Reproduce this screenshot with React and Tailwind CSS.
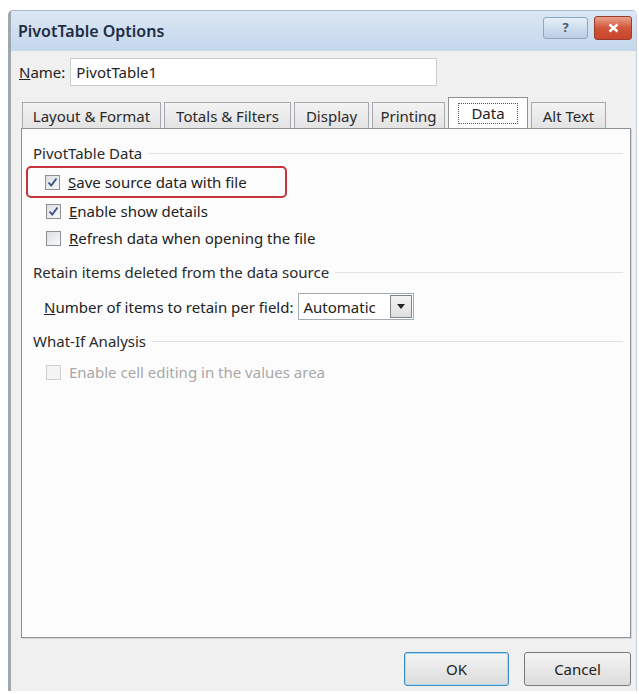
import React from "react";

const font = { fontFamily: '"Noto Sans", "Open Sans", Arial, sans-serif' };

function Check({ checked, disabled }) {
  return (
    <span
      className={`inline-flex h-[15px] w-[15px] shrink-0 items-center justify-center border ${
        disabled ? "border-[#cfcfcf] bg-[#f4f4f4]" : "border-[#8c8f94] bg-gradient-to-br from-[#dcdfe3] to-[#f7f8f9]"
      }`}
    >
      {checked && (
        <svg width="11" height="11" viewBox="0 0 11 11">
          <path d="M1.5 5.5 L4.2 8.5 L9.5 1.5" fill="none" stroke="#3b4f86" strokeWidth="1.8" />
        </svg>
      )}
    </span>
  );
}

function GroupHeader({ children }) {
  return (
    <div className="flex items-center gap-[6px] pr-[5px]">
      <span className="whitespace-nowrap text-[15px] leading-[20px] text-[#2a2a2a]">{children}</span>
      <span className="h-px flex-1 bg-[#dde3e8]" />
    </div>
  );
}

function Tab({ label, active, w }) {
  if (active) {
    return (
      <div className={`-mb-px flex h-[32px] items-center justify-center border border-b-0 border-[#8e9296] bg-white ${w}`}>
        <span className="border border-dotted border-[#555] px-[12px] text-[15px] leading-[19px] text-[#222]">{label}</span>
      </div>
    );
  }
  return (
    <div className={`mt-[5px] flex h-[26px] items-center justify-center border border-b-0 border-[#a6a9ad] bg-gradient-to-b from-[#f3f3f3] to-[#e3e3e3] text-[15px] leading-[20px] text-[#2a2a2a] ${w}`}>
      {label}
    </div>
  );
}

export default function App() {
  return (
    <div className="h-[694px] w-[639px] bg-white pl-[8px] pt-[10px]" style={font}>
      <div className="flex h-[681px] w-[629px] flex-col overflow-hidden rounded-t-[5px] border-l-[3px] border-r border-t border-l-[#9ea6ae] border-r-[#c8d3de] border-t-[#a9b8c8] bg-[#f0f0f0]">
        {/* title bar */}
        <div className="flex h-[40px] items-center justify-between bg-gradient-to-b from-[#dbe7f4] to-[#c4d7ec] pl-[7px] pr-[4px]">
          <span className="text-[16px] font-semibold leading-[20px] text-[#1f2d44]">PivotTable Options</span>
          <div className="mb-[6px] flex items-center gap-[6px]">
            <div className="flex h-[22px] w-[45px] items-center justify-center rounded-[3px] border border-[#8ea5bf] bg-gradient-to-b from-[#e7eff8] to-[#b9cde3] text-[13px] font-bold text-[#4a5a6e]">
              ?
            </div>
            <div className="flex h-[24px] w-[38px] items-center justify-center rounded-[3px] border border-[#9a3b2a] bg-gradient-to-b from-[#e8a08c] via-[#d0553a] to-[#c8452b]">
              <svg width="11" height="10" viewBox="0 0 11 10">
                <path d="M1.5 1.5 L9.5 8.5 M9.5 1.5 L1.5 8.5" stroke="#fff" strokeWidth="2.4" />
              </svg>
            </div>
          </div>
        </div>

        {/* client area */}
        <div className="flex flex-1 flex-col pl-[8px] pr-[5px]">
          <div className="mt-[7px] flex items-center gap-[5px]">
            <span className="text-[15px] leading-[20px] text-[#222]">
              <u>N</u>ame:
            </span>
            <div className="flex h-[28px] w-[367px] items-center border border-[#c9ced4] bg-white pl-[5px] text-[15px] text-[#222]">
              PivotTable1
            </div>
          </div>

          {/* tab strip */}
          <div className="ml-[3px] mt-[11px] flex items-end gap-[3px]">
            <Tab label="Layout & Format" w="w-[139px]" />
            <Tab label="Totals & Filters" w="w-[127px]" />
            <Tab label="Display" w="w-[75px]" />
            <Tab label="Printing" w="w-[73px]" />
            <Tab label="Data" active w="w-[80px]" />
            <Tab label="Alt Text" w="w-[75px]" />
          </div>

          {/* tab panel */}
          <div className="ml-[2px] flex h-[510px] flex-col border border-[#8e9296] bg-[#fcfcfc] pl-[11px] pr-[2px] pt-[14px] shadow-[1px_1px_0_#d8d8d8]">
            <GroupHeader>PivotTable Data</GroupHeader>

            <div className="-ml-[7px] mt-[3px] flex h-[32px] w-[261px] items-center gap-[8px] rounded-[5px] border-[2.5px] border-[#c4343a] pl-[17px]">
              <Check checked />
              <span className="text-[15px] leading-[20px] text-[#222]">
                <u>S</u>ave source data with file
              </span>
            </div>
            <div className="ml-[13px] mt-[3px] flex items-center gap-[8px]">
              <Check checked />
              <span className="text-[15px] leading-[20px] text-[#222]">
                <u>E</u>nable show details
              </span>
            </div>
            <div className="ml-[13px] mt-[7px] flex items-center gap-[8px]">
              <Check />
              <span className="text-[15px] leading-[20px] text-[#222]">
                <u>R</u>efresh data when opening the file
              </span>
            </div>

            <div className="mt-[14px]">
              <GroupHeader>Retain items deleted from the data source</GroupHeader>
            </div>
            <div className="ml-[11px] mt-[11px] flex items-center gap-[5px]">
              <span className="text-[15px] leading-[20px] text-[#222]">
                <u>N</u>umber of items to retain per field:
              </span>
              <div className="flex h-[27px] w-[116px] items-center border border-[#a5abb2] bg-white">
                <span className="flex-1 pl-[4px] text-[15px] leading-[20px] text-[#222]">Automatic</span>
                <div className="mr-[1px] flex h-[23px] w-[22px] items-center justify-center border border-[#7f858c] bg-gradient-to-b from-[#f4f4f4] to-[#dedede]">
                  <svg width="8" height="5" viewBox="0 0 8 5">
                    <path d="M0 0 H8 L4 5 Z" fill="#222" />
                  </svg>
                </div>
              </div>
            </div>

            <div className="mt-[11px]">
              <GroupHeader>What-If Analysis</GroupHeader>
            </div>
            <div className="ml-[13px] mt-[11px] flex items-center gap-[8px]">
              <Check disabled />
              <span className="text-[15px] leading-[20px] text-[#a8a8a8]">Enable cell editing in the values area</span>
            </div>
          </div>

          {/* buttons */}
          <div className="mt-[14px] flex justify-end gap-[15px]">
            <button className="flex h-[34px] w-[105px] items-center justify-center rounded-[3px] border border-[#3c8dc4] bg-gradient-to-b from-[#f4f4f4] to-[#dcdcdc] text-[15px] text-[#222] shadow-[inset_0_0_0_1px_#a8d8f2]">
              OK
            </button>
            <button className="flex h-[34px] w-[107px] items-center justify-center rounded-[3px] border border-[#7a7a7a] bg-gradient-to-b from-[#f4f4f4] to-[#dcdcdc] text-[15px] text-[#222]">
              Cancel
            </button>
          </div>
        </div>
      </div>
    </div>
  );
}
